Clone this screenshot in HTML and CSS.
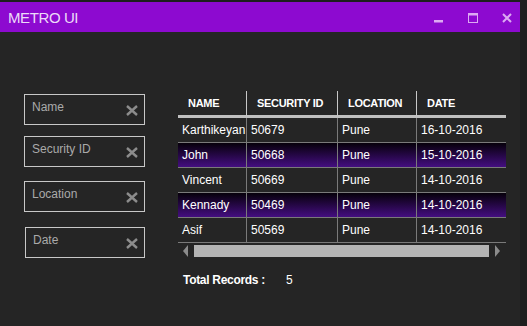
FILE: index.html
```html
<!DOCTYPE html>
<html lang="en">
<head>
  <meta charset="UTF-8" />
  <title>METRO UI</title>
  <link rel="stylesheet" href="styles.css">
</head>
<body>

<div class="window">
  <header class="titlebar">
    <div class="title">METRO UI</div>
    <div class="controls">
      <svg width="10" height="10" viewBox="0 0 10 10"><rect x="0" y="7" width="9" height="2.5" fill="currentColor"/></svg>
      <svg width="10" height="10" viewBox="0 0 10 10"><rect x="0.5" y="0.5" width="9" height="9" fill="none" stroke="currentColor" stroke-width="1"/><rect x="0.5" y="0.5" width="9" height="2" fill="currentColor"/></svg>
      <svg width="10" height="10" viewBox="0 0 10 10"><path d="M1 1 L9 9 M9 1 L1 9" stroke="currentColor" stroke-width="2"/></svg>
    </div>
  </header>

  <div class="content">
    <div class="filters">
      <div class="filter"><span>Name</span><svg class="clear" width="12" height="11" viewBox="0 0 12 11"><path d="M1 1 L11 10 M11 1 L1 10"/></svg></div>
      <div class="filter"><span>Security ID</span><svg class="clear" width="12" height="11" viewBox="0 0 12 11"><path d="M1 1 L11 10 M11 1 L1 10"/></svg></div>
      <div class="filter location"><span>Location</span><svg class="clear" width="12" height="11" viewBox="0 0 12 11"><path d="M1 1 L11 10 M11 1 L1 10"/></svg></div>
      <div class="filter date"><span>Date</span><svg class="clear" width="12" height="11" viewBox="0 0 12 11"><path d="M1 1 L11 10 M11 1 L1 10"/></svg></div>
    </div>

    <div class="grid-area">
      <table class="records">
        <colgroup>
          <col style="width:69px"><col style="width:91px"><col style="width:79px"><col style="width:89px">
        </colgroup>
        <thead>
          <tr><th>NAME</th><th>SECURITY ID</th><th>LOCATION</th><th>DATE</th></tr>
        </thead>
        <tbody>
          <tr><td>Karthikeyan</td><td>50679</td><td>Pune</td><td>16-10-2016</td></tr>
          <tr class="alt"><td>John</td><td>50668</td><td>Pune</td><td>15-10-2016</td></tr>
          <tr><td>Vincent</td><td>50669</td><td>Pune</td><td>14-10-2016</td></tr>
          <tr class="alt"><td>Kennady</td><td>50469</td><td>Pune</td><td>14-10-2016</td></tr>
          <tr><td>Asif</td><td>50569</td><td>Pune</td><td>14-10-2016</td></tr>
        </tbody>
      </table>

      <div class="hscroll">
        <span class="arrow left"></span>
        <span class="thumb"></span>
        <span class="arrow right"></span>
      </div>

      <div class="total">
        <span class="total-label">Total Records :</span>
        <span class="total-value">5</span>
      </div>
    </div>
  </div>
</div>

</body>
</html>
```

FILE: styles.css
```css
:root {
  --bg: rgb(37, 37, 37);
  --edge: rgb(30, 30, 30);
  --purple: rgb(141, 10, 208);
  --lavender: rgb(220, 170, 242);
  --box-border: rgb(200, 200, 200);
  --grid-line: rgb(122, 122, 122);
}

html, body {
  margin: 0;
  height: 100%;
}

body {
  background-color: var(--edge);
  font-family: 'Liberation Sans', Arial, sans-serif;
  color: white;
  overflow: hidden;
}

.window {
  width: 520px;
  height: 324px;
  margin-top: 2px;
  background-color: var(--bg);
}

.titlebar {
  height: 30px;
  background-color: var(--purple);
  display: flex;
  align-items: center;
  justify-content: space-between;
  padding: 0 8px;
}

.title {
  font-size: 15px;
  letter-spacing: -0.4px;
  color: rgb(236, 218, 248);
}

.controls {
  display: flex;
  align-items: center;
  gap: 24px;
  color: var(--lavender);
  padding-top: 1px;
}

.controls svg {
  display: block;
}

.content {
  display: flex;
  padding-left: 24px;
  gap: 33px;
}

.filters {
  width: 121px;
  padding-top: 62px;
  display: flex;
  flex-direction: column;
  gap: 11px;
}

.filter {
  height: 31px;
  box-sizing: border-box;
  border: 1px solid var(--box-border);
  display: flex;
  justify-content: space-between;
  align-items: center;
  padding: 1px 6px 0 7px;
  font-size: 12px;
  color: rgb(170, 170, 170);
}

.filter span {
  align-self: flex-start;
  padding-top: 4px;
}

.filter.location {
  margin-top: 3px;
}

.filter.date {
  margin-top: 4px;
  margin-left: 1px;
}

.clear path {
  stroke: rgb(140, 140, 140);
  stroke-width: 2.4;
}

.grid-area {
  padding-top: 59px;
}

.records {
  width: 328px;
  table-layout: fixed;
  border-collapse: separate;
  border-spacing: 0;
  font-size: 12px;
}

.records thead tr {
  height: 27px;
}

.records th {
  text-align: left;
  font-size: 11px;
  letter-spacing: -0.3px;
  font-weight: bold;
  padding: 0 0 0 10px;
  border-bottom: 3px solid rgb(192, 192, 192);
  border-right: 1px solid var(--box-border);
}

.records tbody tr {
  height: 25px;
}

.records td {
  padding: 0 0 0 4px;
  white-space: nowrap;
  overflow: hidden;
  border-bottom: 1px solid var(--grid-line);
  border-right: 1px solid var(--grid-line);
}

.records th:last-child,
.records td:last-child {
  border-right: none;
}

.records tr.alt td {
  background: linear-gradient(to bottom, rgb(6, 0, 10), rgb(68, 14, 128));
}

.hscroll {
  width: 328px;
  height: 12px;
  margin-top: 2px;
  display: flex;
  align-items: center;
  padding-left: 5px;
  gap: 6px;
}

.arrow {
  width: 0;
  height: 0;
  border-top: 6px solid transparent;
  border-bottom: 6px solid transparent;
}

.arrow.left {
  border-right: 5px solid rgb(140, 140, 140);
}

.arrow.right {
  border-left: 5px solid rgb(140, 140, 140);
}

.thumb {
  width: 295px;
  height: 12px;
  background-color: rgb(180, 180, 180);
}

.total {
  margin-top: 16px;
  padding-left: 5px;
  display: flex;
  font-size: 12px;
}

.total-label {
  font-weight: bold;
  letter-spacing: -0.3px;
  width: 103px;
}
```
